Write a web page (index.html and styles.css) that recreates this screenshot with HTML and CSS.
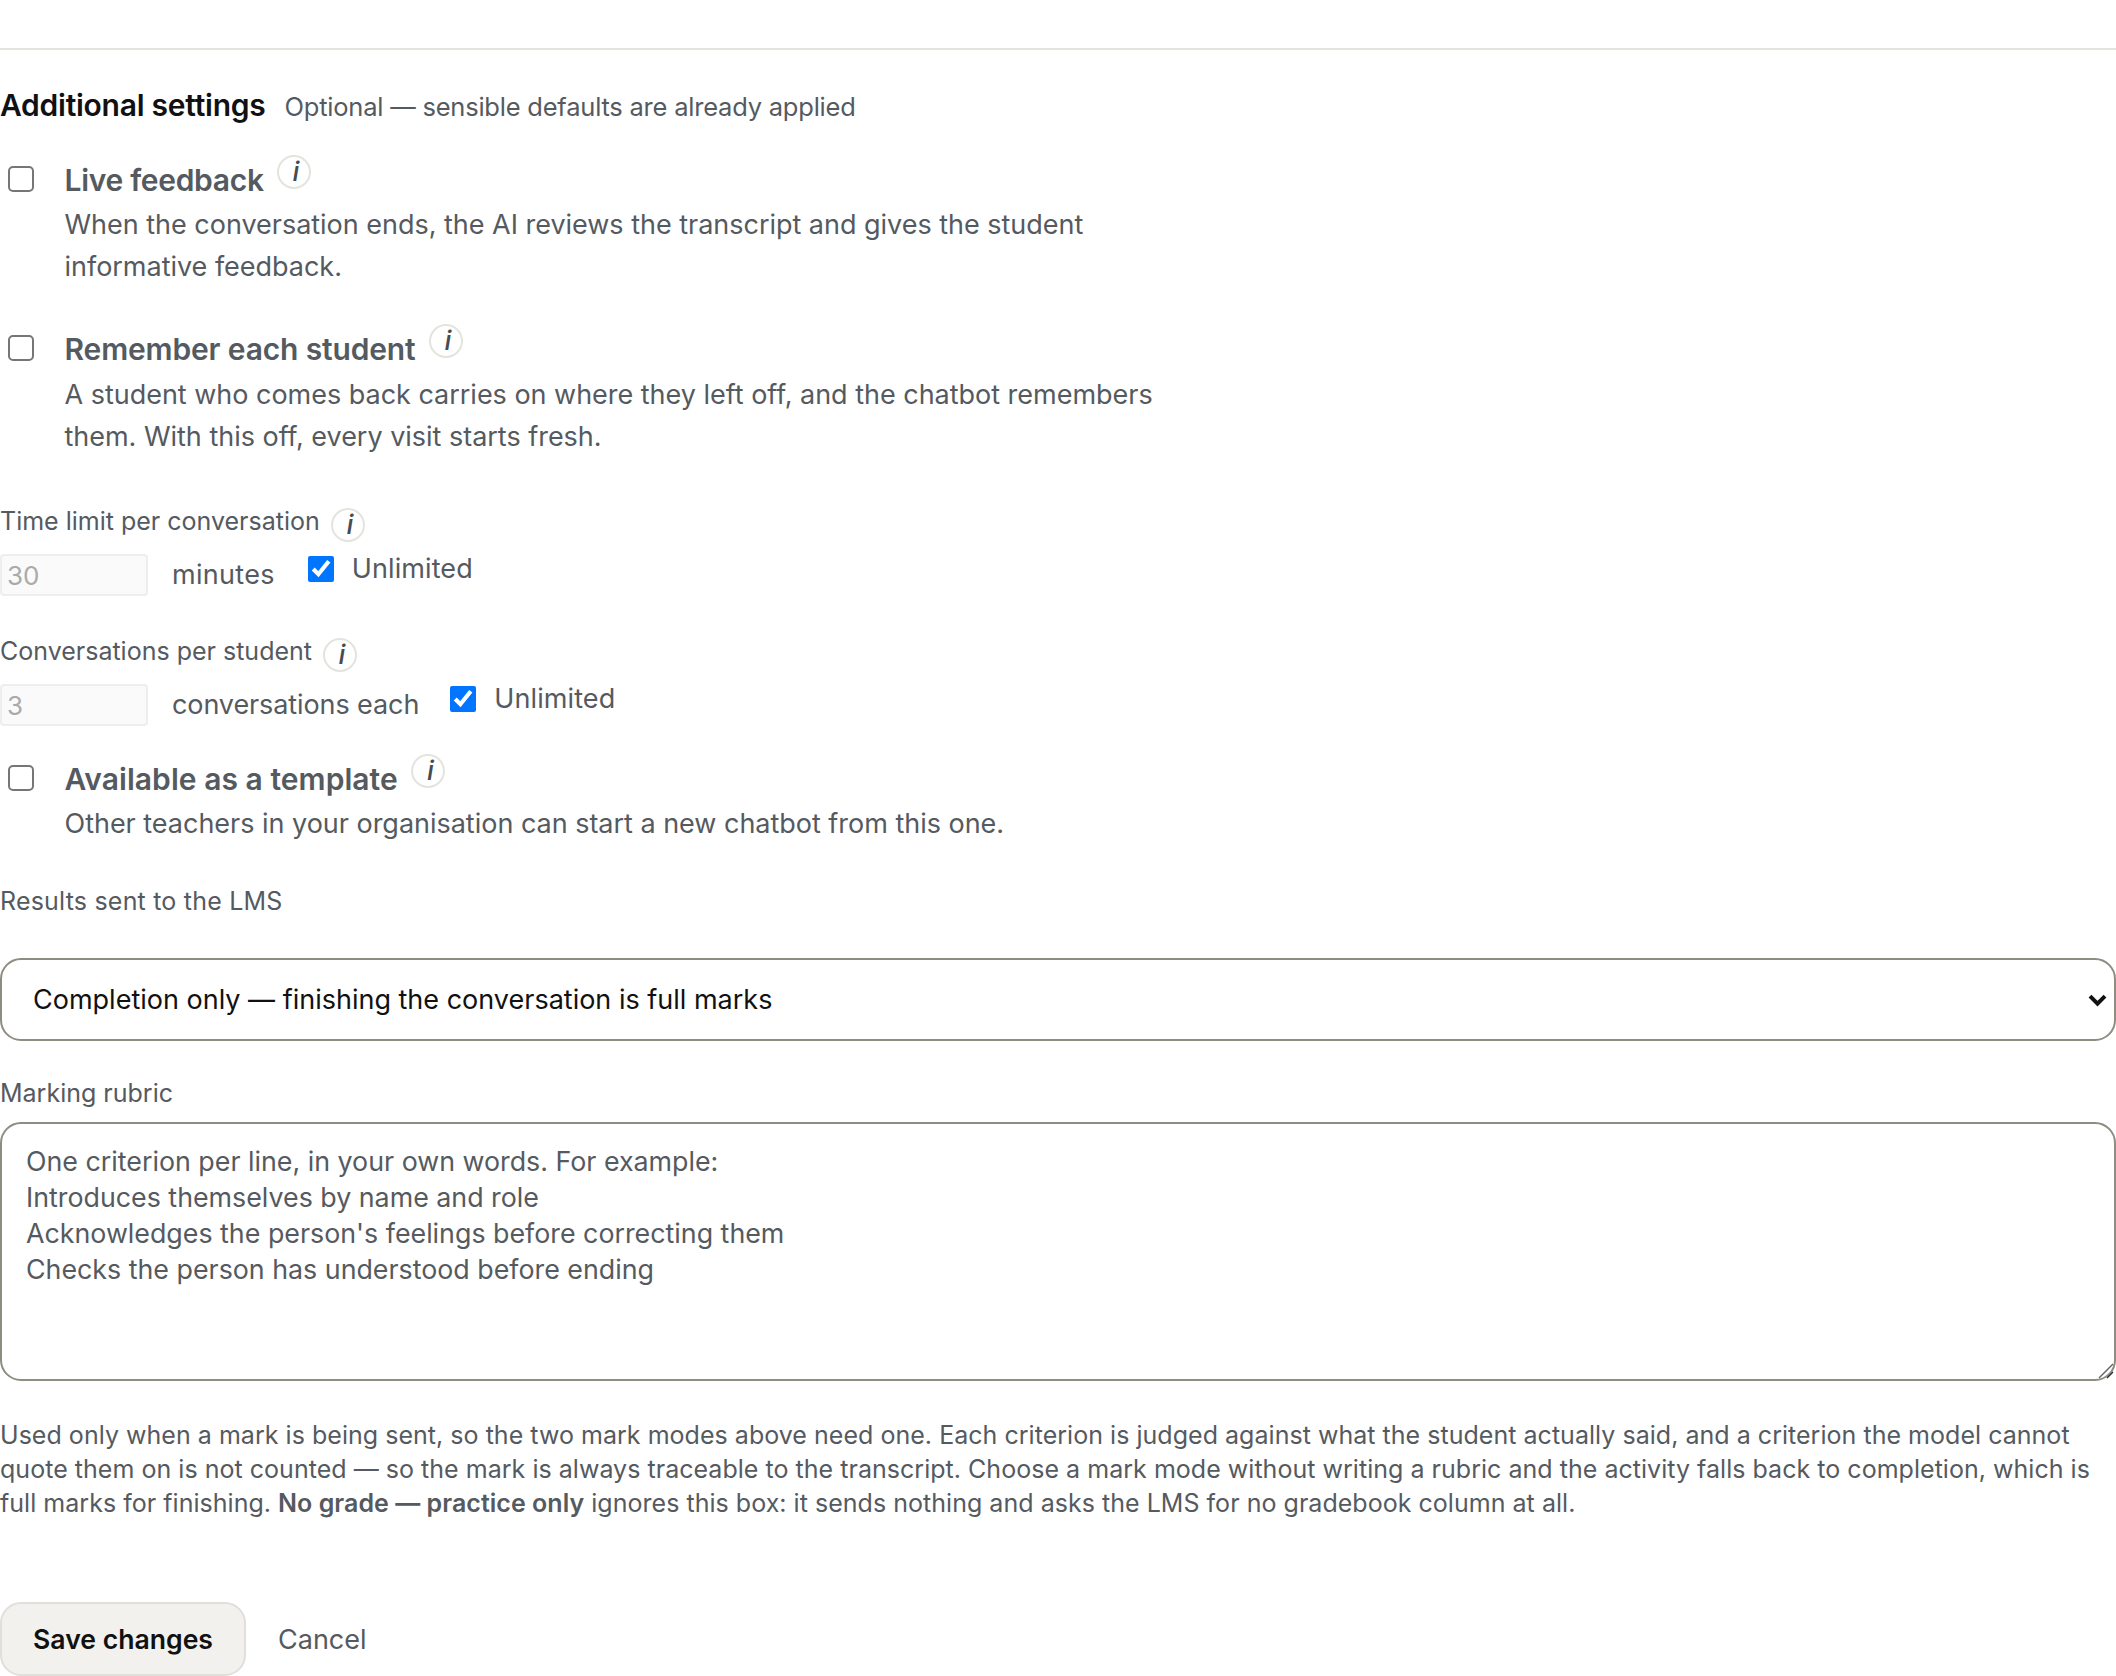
FILE: index.html
```html
<!DOCTYPE html>
<html lang="en">
<head>
    <meta charset="UTF-8">
    <meta name="viewport" content="width=device-width, initial-scale=1.0">
    <title>Additional settings</title>
    <link rel="stylesheet" href="styles.css">
</head>
<body>
    <hr class="divider">

    <div class="section-head">
        <h2>Additional settings</h2>
        <span class="section-note">Optional — sensible defaults are already applied</span>
    </div>

    <div class="toggle toggle-feedback">
        <input type="checkbox" id="liveFeedback">
        <div class="toggle-body">
            <label class="toggle-title" for="liveFeedback">Live feedback <span class="info info-raised">i</span></label>
            <p class="toggle-text">When the conversation ends, the AI reviews the transcript and gives the student informative feedback.</p>
        </div>
    </div>

    <div class="toggle toggle-memory">
        <input type="checkbox" id="rememberStudent">
        <div class="toggle-body">
            <label class="toggle-title" for="rememberStudent">Remember each student <span class="info info-raised">i</span></label>
            <p class="toggle-text">A student who comes back carries on where they left off, and the chatbot remembers them. With this off, every visit starts fresh.</p>
        </div>
    </div>

    <div class="limit limit-time">
        <div class="field-label">Time limit per conversation <span class="info">i</span></div>
        <div class="limit-row">
            <input class="limit-input" type="number" value="30" disabled>
            <span class="limit-unit">minutes</span>
            <label class="unlimited"><input type="checkbox" checked> Unlimited</label>
        </div>
    </div>

    <div class="limit limit-count">
        <div class="field-label">Conversations per student <span class="info">i</span></div>
        <div class="limit-row">
            <input class="limit-input" type="number" value="3" disabled>
            <span class="limit-unit">conversations each</span>
            <label class="unlimited"><input type="checkbox" checked> Unlimited</label>
        </div>
    </div>

    <div class="toggle toggle-template">
        <input type="checkbox" id="template">
        <div class="toggle-body">
            <label class="toggle-title" for="template">Available as a template <span class="info info-raised">i</span></label>
            <p class="toggle-text">Other teachers in your organisation can start a new chatbot from this one.</p>
        </div>
    </div>

    <div class="field-label results-label">Results sent to the LMS</div>
    <div class="select-wrap">
        <select class="results-select">
            <option>Completion only — finishing the conversation is full marks</option>
        </select>
        <svg class="select-arrow" width="19" height="13" viewBox="0 0 19 13"><path d="M2 2.2l7.5 7.5L17 2.2" fill="none" stroke="#111" stroke-width="4"/></svg>
    </div>

    <div class="field-label rubric-label">Marking rubric</div>
    <div class="rubric-wrap">
        <textarea class="rubric" placeholder="One criterion per line, in your own words. For example:&#10;Introduces themselves by name and role&#10;Acknowledges the person's feelings before correcting them&#10;Checks the person has understood before ending"></textarea>
        <svg class="rubric-grip" width="16" height="16" viewBox="0 0 16 16"><path d="M1 15L15 1" stroke="#666" stroke-width="1.4"/><path d="M9 15l6-6" stroke="#333" stroke-width="1.4"/></svg>
    </div>

    <p class="help">Used only when a mark is being sent, so the two mark modes above need one. Each criterion is judged against what the student actually said, and a criterion the model cannot quote them on is not counted — so the mark is always traceable to the transcript. Choose a mark mode without writing a rubric and the activity falls back to completion, which is full marks for finishing. <strong>No grade — practice only</strong> ignores this box: it sends nothing and asks the LMS for no gradebook column at all.</p>

    <div class="actions">
        <button class="save">Save changes</button>
        <a class="cancel" href="#">Cancel</a>
    </div>
</body>
</html>
```

FILE: styles.css
```css
* { box-sizing: border-box; }
html, body { overflow: hidden; }
body {
    margin: 0;
    height: 1676px;
    font-family: Inter, "Liberation Sans", sans-serif;
    font-size: 27px;
    color: #555a60;
    background: #fff;
}
.divider { margin: 48px 0 0; border: 0; border-top: 2px solid #e4e4de; }

.section-head { display: flex; align-items: baseline; gap: 19px; margin-top: 35px; }
.section-head h2 { margin: 0; font-size: 30px; line-height: 40px; font-weight: 600; color: #111; letter-spacing: -0.25px; }
.section-note { font-size: 25.5px; letter-spacing: -0.22px; }

.toggle { display: flex; align-items: flex-start; gap: 30.5px; padding-left: 8px; }
.toggle input {
    appearance: none;
    flex: none;
    width: 26px;
    height: 26px;
    margin: 7px 0 0;
    border: 2.5px solid #767676;
    border-radius: 5px;
    background: #fff;
}
.toggle-feedback { margin-top: 34px; }
.toggle-memory { margin-top: 40px; }
.toggle-template { margin-top: 32px; }
.toggle-title { display: block; font-size: 30px; line-height: 42px; font-weight: 600; letter-spacing: -0.3px; }
.toggle-memory .toggle-title { letter-spacing: -0.15px; }
.toggle-template .toggle-title { letter-spacing: 0.05px; }
.toggle-text { margin: 3px 0 0; max-width: 1100px; line-height: 42px; font-size: 27px; letter-spacing: -0.02px; }
.toggle-memory .toggle-text { margin-top: 4px; }

.info {
    display: inline-flex;
    align-items: flex-end;
    justify-content: center;
    width: 34px;
    height: 34px;
    margin-left: 4px;
    padding-left: 4px;
    border: 2px solid #e4e4de;
    border-radius: 50%;
    font-size: 27px;
    line-height: 30px;
    font-style: italic;
    font-weight: 500;
    letter-spacing: 0;
    color: #444b55;
    vertical-align: middle;
    position: relative;
    top: 2px;
}
.info-raised { top: -11px; margin-left: 6px; }

.limit-time { margin-top: 46px; }
.limit-count { margin-top: 38px; }
.field-label { font-size: 25px; line-height: 34px; }
.limit-row { display: flex; align-items: flex-start; margin-top: 14px; }
.limit-input {
    width: 148px;
    height: 42px;
    padding: 0 5px;
    border: 2px solid #eee;
    border-radius: 4px;
    background: #fafafa;
    font: inherit;
    font-size: 26px;
    color: #aaa;
    appearance: textfield;
}
.limit-unit { margin-left: 24px; line-height: 42px; }
.limit-time .limit-unit { letter-spacing: 0.3px; }
.limit-count .limit-unit { letter-spacing: -0.1px; }
.limit-count .unlimited { margin-left: 31px; }
.unlimited { display: flex; align-items: center; gap: 18px; margin-left: 33px; line-height: 30px; letter-spacing: 0.1px; }
.unlimited input { width: 26px; height: 26px; margin: 0; accent-color: #0075ff; }

.results-label { margin-top: 39px; letter-spacing: 0.2px; }
.select-wrap { position: relative; margin-top: 40px; }
.results-select {
    display: block;
    width: 100%;
    height: 83px;
    padding: 0 31px;
    border: 2px solid #8f8c80;
    border-radius: 21px;
    background: #fff;
    font: inherit;
    font-size: 27px;
    color: #111;
    appearance: none;
}
.select-arrow { position: absolute; top: 36px; right: 9px; pointer-events: none; }
.rubric-label { margin-top: 35px; }
.rubric-wrap { position: relative; margin-top: 12px; }
.rubric {
    display: block;
    width: 100%;
    height: 259px;
    padding: 19px 24px;
    border: 2px solid #8f8c80;
    border-radius: 21px;
    font: inherit;
    font-size: 26.8px;
    line-height: 36px;
    resize: none;
}
.rubric::placeholder { color: #555a60; opacity: 1; }
.rubric-grip { position: absolute; right: 2px; bottom: 2px; pointer-events: none; }

.help { margin: 37px 0 0; font-size: 25px; line-height: 34px; letter-spacing: 0.03px; }
.help strong { font-weight: 600; }

.actions { display: flex; align-items: center; gap: 32px; margin-top: 82px; }
.save {
    width: 246px;
    height: 74px;
    border: 2px solid #e0dfd9;
    border-radius: 21px;
    background: #f2f1ee;
    font: inherit;
    font-size: 26.6px;
    font-weight: 600;
    color: #111;
}
.cancel { color: #555a60; text-decoration: none; }
```
